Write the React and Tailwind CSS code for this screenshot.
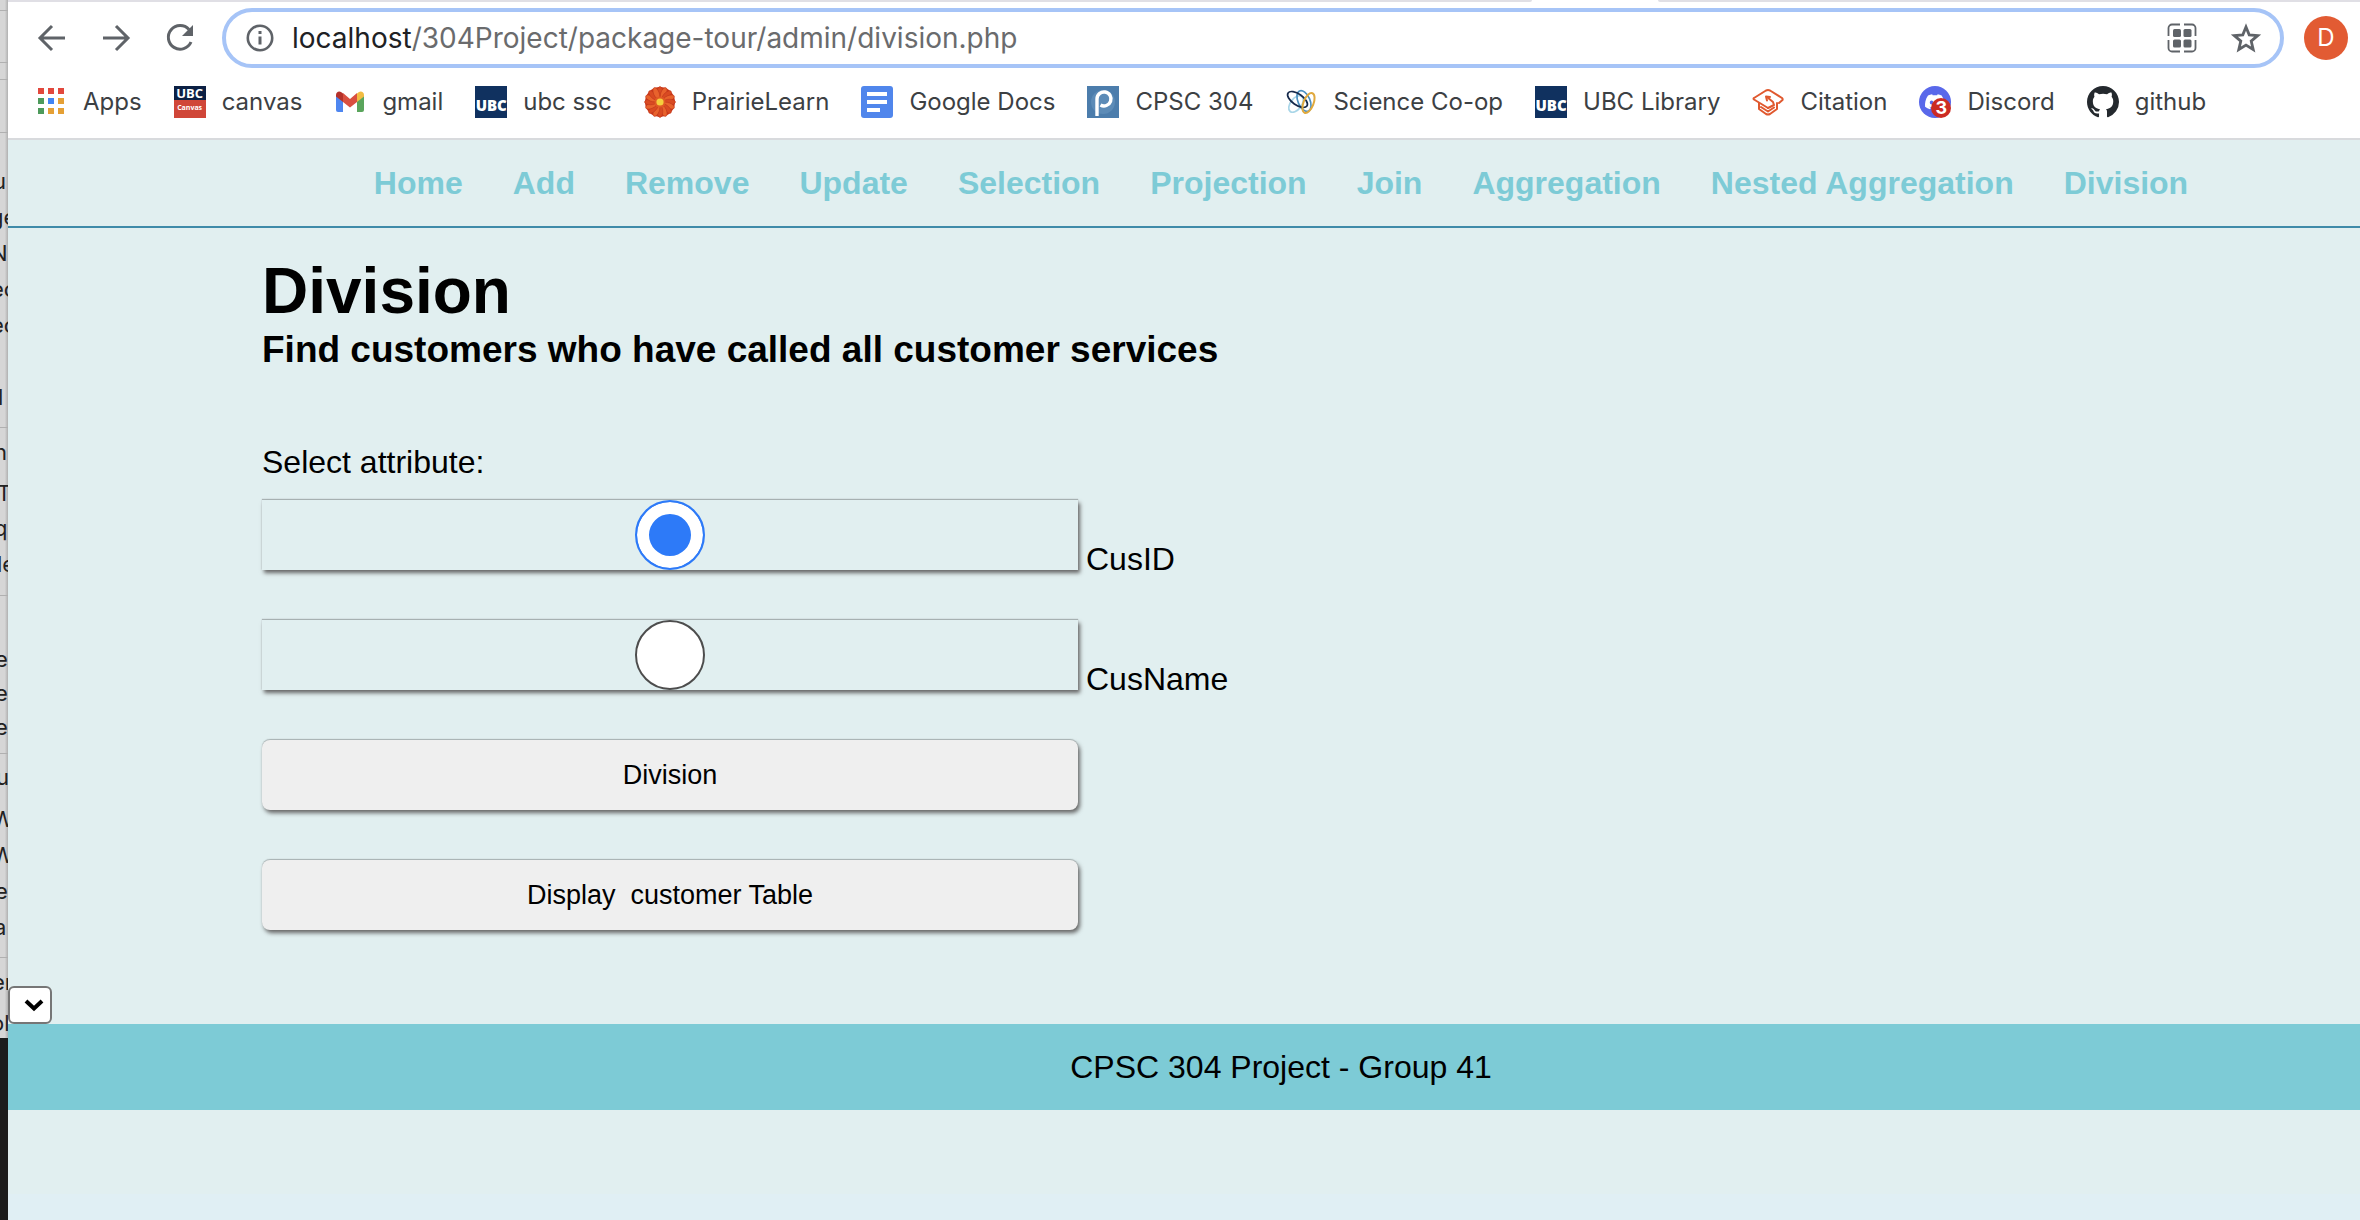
import React from "react";

const INTER = "font-['Inter',sans-serif]";

function Glyph({ children, className = "w-8 h-8", vb = "0 0 32 32" }) {
  return (
    <svg viewBox={vb} className={className + " shrink-0"} fill="none" aria-hidden="true">
      {children}
    </svg>
  );
}

const AppsIcon = () => (
  <Glyph>
    {["#e2483d", "#e2483d", "#e2483d", "#4d9a5b", "#4285f4", "#e5a035", "#4d9a5b", "#e5a035", "#e5a035"].map((c, i) => (
      <rect key={i} x={3 + (i % 3) * 10} y={2 + Math.floor(i / 3) * 10} width="6" height="6" fill={c} />
    ))}
  </Glyph>
);

const CanvasIcon = () => (
  <span className="flex h-8 w-8 shrink-0 flex-col text-center font-['Open_Sans',sans-serif] font-bold text-white">
    <span className="h-3.5 bg-[#0c2044] text-[13px] leading-[14px]">UBC</span>
    <span className="h-[18px] bg-[#d04638] text-[7px] leading-[16px]">Canvas</span>
  </span>
);

const UbcIcon = () => (
  <span className="flex h-8 w-8 shrink-0 items-center justify-center overflow-hidden bg-[#10315f] pt-1.5 font-['Open_Sans',sans-serif] text-[15px] leading-4 font-extrabold text-white">
    UBC
  </span>
);

const GmailIcon = () => (
  <Glyph>
    <path d="M2 9v15a2 2 0 0 0 2 2h5V14z" fill="#4e86f0" />
    <path d="M30 9v15a2 2 0 0 1-2 2h-5V14z" fill="#5aa55c" />
    <path d="M23 7.500l1.600-1.300C27 4.500 30 6 30 9v1.500L23 16z" fill="#f2bc42" />
    <path d="M9 14.500V7l7 6 7-6v9l-7 5.500L9 16z" fill="#d94f40" />
    <path d="M2 10.500V9c0-3 3-4.500 5.400-2.800L9 7.500V16z" fill="#b5312a" />
  </Glyph>
);

const FlowerIcon = () => (
  <Glyph>
    <circle cx="16" cy="16" r="15" fill="#cf3a1c" />
    {Array.from({ length: 16 }).map((_, i) => (
      <ellipse key={i} cx="16" cy="6.500" rx="2.800" ry="6" fill={i % 2 ? "#e8622c" : "#d94a22"} stroke="#b9321a" strokeWidth=".5" transform={`rotate(${(i * 360) / 16} 16 16)`} />
    ))}
    <circle cx="16" cy="16" r="5.500" fill="#df5a25" />
    <circle cx="16" cy="16" r="3.600" fill="#f5cf3d" />
  </Glyph>
);

const DocsIcon = () => (
  <Glyph>
    <rect width="32" height="32" rx="3" fill="#5086ec" />
    <path d="M6 6h20v4H6zM6 14h20v4H6zM6 22h13v4H6z" fill="#fff" />
  </Glyph>
);

const PiazzaIcon = () => (
  <Glyph>
    <rect width="32" height="32" fill="#4c7dac" />
    <circle cx="16" cy="16" r="12" fill="#5c8bb7" />
    <path d="M10 30V13a7 7 0 1 1 3.500 6" stroke="#fff" strokeWidth="3.400" />
  </Glyph>
);

const CoopIcon = () => (
  <Glyph>
    <g strokeWidth="1.700">
      <ellipse cx="11" cy="18" rx="5.500" ry="9.500" transform="rotate(38 11 18)" stroke="#a9d6e8" />
      <ellipse cx="19" cy="15" rx="6" ry="11" transform="rotate(-24 19 15)" stroke="#4a8fc0" />
      <ellipse cx="12.500" cy="13.500" rx="5.500" ry="11.500" transform="rotate(-55 12.500 13.500)" stroke="#15294b" />
      <ellipse cx="23.500" cy="17" rx="5" ry="10.500" transform="rotate(22 23.500 17)" strokeWidth="2" stroke="#e0a93d" />
    </g>
  </Glyph>
);

const CitationIcon = () => (
  <Glyph>
    <g stroke="#e0592f" strokeWidth="2" strokeLinejoin="round" strokeLinecap="round">
      <path d="M16 22L2 13.500Q1 12.500 2 12L14 4.500Q16 3.500 18 4.500L30 12Q31 13 30.500 14L27 17" />
      <path d="M16 22l6-3-1-3-6-5" />
      <path d="M7 17v6l7 5q2 1 4 0l7-5v-6M9 21l7 4.500 6-4" />
      <path d="M14 10.500l4 .5M14 10.500l1 4" />
    </g>
  </Glyph>
);

const DISCORD = "M20.317 4.370a19.791 19.791 0 0 0-4.885-1.515c-.21.375-.444.864-.608 1.250a18.270 18.270 0 0 0-5.487 0 12.640 12.640 0 0 0-.617-1.250A19.736 19.736 0 0 0 3.677 4.370C.533 9.046-.32 13.580.099 18.058a19.900 19.900 0 0 0 5.993 3.030c.462-.63.874-1.295 1.226-1.994a13.107 13.107 0 0 1-1.872-.892c.126-.094.252-.192.372-.291 3.928 1.793 8.180 1.793 12.062 0 .12.098.246.198.373.292-.6.350-1.220.645-1.873.892.360.698.772 1.362 1.225 1.993a19.839 19.839 0 0 0 6.002-3.030c.5-5.177-.838-9.674-3.290-13.688ZM8.020 15.330c-1.183 0-2.157-1.085-2.157-2.419s.955-2.419 2.157-2.419c1.210 0 2.176 1.095 2.157 2.420 0 1.333-.956 2.418-2.157 2.418Zm7.975 0c-1.183 0-2.157-1.085-2.157-2.419s.955-2.419 2.157-2.419c1.210 0 2.176 1.095 2.157 2.420 0 1.333-.946 2.418-2.157 2.418Z";

const DiscordIcon = () => (
  <span className="relative h-8 w-8 shrink-0">
    <Glyph>
      <circle cx="16" cy="16" r="16" fill="#5968ea" />
      <path d={DISCORD} fill="#fff" fillRule="evenodd" transform="translate(6 6) scale(.82)" />
    </Glyph>
    <span className={"absolute right-0 bottom-0 flex h-5 w-5 items-center justify-center rounded-full bg-[#cc2b23] text-[18px] leading-5 font-bold text-white " + INTER}>3</span>
  </span>
);

const GithubIcon = () => (
  <Glyph vb="0 0 16 16">
    <path fill="#24292e" d="M8 0C3.580 0 0 3.580 0 8c0 3.540 2.290 6.530 5.470 7.590.4.070.55-.17.55-.38 0-.19-.01-.82-.01-1.490-2.010.37-2.530-.49-2.690-.94-.09-.23-.48-.94-.82-1.130-.28-.15-.68-.52-.01-.53.63-.01 1.080.58 1.230.82.720 1.210 1.870.87 2.330.66.070-.52.28-.87.51-1.070-1.780-.2-3.640-.89-3.640-3.950 0-.87.31-1.590.82-2.150-.08-.2-.36-1.020.08-2.120 0 0 .67-.21 2.200.82.640-.18 1.320-.27 2-.27s1.360.09 2 .27c1.530-1.040 2.200-.82 2.200-.82.440 1.100.160 1.920.08 2.120.51.560.82 1.270.82 2.150 0 3.070-1.870 3.750-3.650 3.950.29.250.54.730.54 1.480 0 1.070-.01 1.930-.01 2.200 0 .21.150.46.550.38A8.010 8.010 0 0 0 16 8c0-4.420-3.580-8-8-8z" />
  </Glyph>
);

const BOOKMARKS = [
  ["Apps", AppsIcon], ["canvas", CanvasIcon], ["gmail", GmailIcon], ["ubc ssc", UbcIcon],
  ["PrairieLearn", FlowerIcon], ["Google Docs", DocsIcon], ["CPSC 304", PiazzaIcon],
  ["Science Co-op", CoopIcon], ["UBC Library", UbcIcon], ["Citation", CitationIcon],
  ["Discord", DiscordIcon], ["github", GithubIcon],
];

const NAV = ["Home", "Add", "Remove", "Update", "Selection", "Projection", "Join", "Aggregation", "Nested Aggregation", "Division"];

/* Lines of the document window that shows behind the browser's left edge: top, left, letters. */
const BEHIND = [
  [167, -7, "u"], [203, -10, "ge"], [239, -9, "N"], [275, -9, "ec"], [311, -9, "ec"], [383, -2, "l"],
  [438, -6, "n"], [479, -3, "T"], [514, -6, "q"], [550, -3, "le"], [645, -5, "e"], [679, -5, "e"],
  [713, -5, "e"], [763, -4, "u"], [805, -8, "W"], [841, -8, "W"], [877, -5, "e"], [913, -6, "a"],
  [968, -8, "er"], [1009, -9, "ol"],
];
const RULES = [10, 62, 79, 132, 427, 595, 753, 957];

function Behind() {
  return (
    <div className={"relative w-2 shrink-0 overflow-hidden bg-[#1c1c1c] text-[22px] leading-7 text-[#222] " + INTER} aria-hidden="true">
      <div className="relative h-[1038px] overflow-hidden bg-linear-to-r from-[#d6d6d6] from-60% to-[#b0b0b0]">
        {RULES.map((y) => <div key={y} className="absolute h-px w-2 bg-[#b0b0b0]" style={{ top: y }} />)}
        {BEHIND.map(([top, left, t]) => (
          <span key={top} className="absolute" style={{ top, left }}>{t}</span>
        ))}
      </div>
    </div>
  );
}

/* Bottom edge of the tab strip, open under the active tab. */
function TabStripEdge() {
  return (
    <div className="flex h-0.5">
      <div className="flex-1 rounded-br-sm bg-[#e0dfe5]" />
      <div className="w-[126px]" />
      <div className="w-[702px] rounded-bl-sm bg-[#e0dfe5]" />
    </div>
  );
}

function Toolbar() {
  return (
    <div className="flex h-[66px] items-center pt-1.5 pr-3 pl-7">
      <button aria-label="Back" className="mr-8 text-[#5f6368]">
        <Glyph><path d="M29 16H4M16 4L4 16l12 12" stroke="currentColor" strokeWidth="3" /></Glyph>
      </button>
      <button aria-label="Forward" className="mr-8 text-[#5f6368]">
        <Glyph><path d="M3 16h25M16 4l12 12-12 12" stroke="currentColor" strokeWidth="3" /></Glyph>
      </button>
      <button aria-label="Reload" className="mr-[26px] text-[#5f6368]">
        <Glyph>
          <path d="M25 7.500A11.800 11.800 0 1 0 27 20" stroke="currentColor" strokeWidth="3" />
          <path d="M29 3v11H18z" fill="currentColor" />
        </Glyph>
      </button>
      <div className="flex h-[60px] flex-1 items-center rounded-full border-4 border-[#a6c4f7] pr-[18px] pl-[18px]">
        <Glyph className="mr-4 h-8 w-8">
          <circle cx="16" cy="16" r="12.200" stroke="#5f6368" strokeWidth="2.600" />
          <path d="M16 9v3M16 14.500v8" stroke="#5f6368" strokeWidth="3" />
        </Glyph>
        <div role="textbox" aria-label="Address" className="flex-1 text-[28px] leading-9 text-[#6a6b6d]">
          <span className="text-[#202124]">localhost</span>/304Project/package-tour/admin/division.php
        </div>
        <button aria-label="QR code" className="mr-8">
          <Glyph>
            <path d="M14 2.500H6A3.500 3.500 0 0 0 2.500 6v8M18 2.500h8A3.500 3.500 0 0 1 29.500 6v8M14 29.500H6A3.500 3.500 0 0 1 2.500 26v-8M18 29.500h8a3.500 3.500 0 0 0 3.500-3.500v-8" stroke="#5f6368" strokeWidth="1.800" />
            <g fill="#5f6368">
              <rect x="7" y="7" width="8" height="8" rx="1.500" />
              <rect x="17.500" y="7" width="8" height="8" rx="1.500" />
              <rect x="7" y="17.500" width="8" height="8" rx="1.500" />
              <rect x="17.500" y="17.500" width="8" height="8" rx="1.500" />
            </g>
          </Glyph>
        </button>
        <button aria-label="Bookmark this tab">
          <Glyph><path d="M16 5l3.200 7.900 8.500.7-6.500 5.500 2 8.400-7.200-4.400-7.200 4.400 2-8.400-6.500-5.500 8.500-.7z" stroke="#5f6368" strokeWidth="2.800" /></Glyph>
        </button>
      </div>
      <button className="ml-5 h-11 w-11 rounded-full bg-[#e25b33] text-[24px] text-white">D</button>
    </div>
  );
}

const RAISED = "shadow-[2px_3px_4px_#666,0_-1px_1px_#aab4b5]";

export default function App() {
  return (
    <div className="flex min-h-screen overflow-hidden">
      <Behind />
      <div className="flex min-w-0 flex-1 flex-col bg-[#e1eff0]">
        <header className={"border-b-2 border-[#d8dadd] bg-white " + INTER}>
          <TabStripEdge />
          <Toolbar />
          <div className="flex h-[70px] items-center gap-8 pb-0.5 pl-[27px] text-[24px] leading-8 whitespace-nowrap text-[#3c4043]">
            {BOOKMARKS.map(([name, Icon]) => (
              <a key={name} href="#" className="flex items-center gap-4"><Icon />{name}</a>
            ))}
          </div>
        </header>
        <div className="flex flex-1 flex-col font-['Liberation_Sans',Arial,sans-serif] text-black">
          <nav className="flex h-[88px] items-center justify-center gap-[50px] border-b-2 border-[#3f8ba9] pl-[194px] text-[32px] font-bold whitespace-nowrap text-[#7dcbd6]">
            {NAV.map((n) => <a key={n} href="#">{n}</a>)}
          </nav>
          <main className="px-[254px] pt-[26px] pb-14">
            <h1 className="text-[64px] leading-[74px] font-bold">Division</h1>
            <h2 className="text-[37px] leading-[43px] font-bold">Find customers who have called all customer services</h2>
            <form className="mt-[73px] flex flex-col items-start gap-[50px] text-[32px] leading-9" onSubmit={(e) => e.preventDefault()}>
              <fieldset className="flex flex-col gap-[50px]">
                <legend className="mb-5">Select attribute:</legend>
                {["CusID", "CusName"].map((n, i) => (
                  <label key={n} className="flex h-[70px] items-baseline">
                    <span className={"mr-2 flex h-[70px] w-[816px] items-center justify-center bg-[#e1eff0] " + RAISED}>
                      <input
                        type="radio"
                        name="attribute"
                        defaultChecked={i === 0}
                        className="h-[70px] w-[70px] appearance-none rounded-full border-2 border-[#4d4d4d] bg-white checked:border-[#2d7af8] checked:bg-[#2d7af8] checked:shadow-[inset_0_0_0_12px_#fff]"
                      />
                    </span>
                    {n}
                  </label>
                ))}
              </fieldset>
              {["Division", "Display  customer Table"].map((n) => (
                <button key={n} className={"h-[70px] w-[816px] rounded-lg bg-[#efefef] text-[27px] whitespace-pre " + RAISED}>{n}</button>
              ))}
            </form>
          </main>
          <div className="relative flex h-[38px] w-11 items-center">
            <select aria-label="Table" className="h-[38px] w-11 appearance-none rounded-md border-2 border-[#767676] bg-white" />
            <svg viewBox="0 0 20 14" className="pointer-events-none absolute right-2 h-3.5 w-5" fill="none" aria-hidden="true">
              <path d="M2 3l8 7.500L18 3" stroke="#000" strokeWidth="4" />
            </svg>
          </div>
          <footer className="flex h-[86px] items-center justify-center bg-[#7dcbd6] pl-[194px] text-[32px]">CPSC 304 Project - Group 41</footer>
        </div>
        <div className="h-[26px] bg-[#e0eff4]" />
      </div>
    </div>
  );
}
